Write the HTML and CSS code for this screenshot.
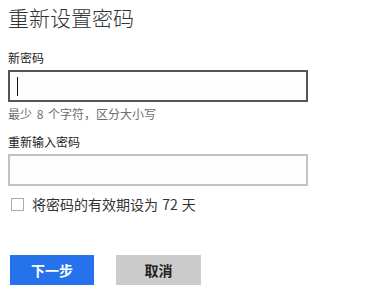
FILE: index.html
```html
<!DOCTYPE html>
<html lang="zh-CN">
<head>
<meta charset="utf-8">
<title>重新设置密码</title>
<link rel="stylesheet" href="styles.css">
</head>
<body>
<div class="page">
  <h1 class="title">重新设置密码</h1>
  <label class="label first">新密码</label>
  <div class="input active"><span class="caret"></span></div>
  <div class="hint">最少 8 个字符，区分大小写</div>
  <label class="label second">重新输入密码</label>
  <div class="input"></div>
  <div class="check-row">
    <span class="checkbox"></span>
    <span class="check-text">将密码的有效期设为 72 天</span>
  </div>
  <div class="buttons">
    <button class="btn primary">下一步</button>
    <button class="btn secondary">取消</button>
  </div>
</div>
</body>
</html>
```

FILE: styles.css
```css
* { box-sizing: border-box; }
html, body { margin: 0; padding: 0; background: #fff; }
body {
  font-family: "Noto Sans CJK SC", "Noto Sans", sans-serif;
  color: #222;
  width: 385px;
  height: 295px;
  overflow: hidden;
}
.page {
  padding: 4px 8px 0 8px;
  display: flex;
  flex-direction: column;
  align-items: flex-start;
}
.title {
  margin: 0;
  font-size: 21px;
  font-weight: 300;
  line-height: 26px;
  color: #333;
}
.label {
  display: block;
  font-size: 12px;
  line-height: 16px;
  color: #222;
}
.label.first { margin-top: 20px; }
.label.second { margin-top: 12px; }
.input {
  margin-top: 4px;
  width: 300px;
  height: 32px;
  border: 2px solid #c2c2c2;
  background: #fdfdfd;
  display: flex;
  align-items: center;
  padding-left: 7px;
}
.input.active { border-color: #555; }
.caret {
  width: 1px;
  height: 19px;
  background: #111;
}
.hint {
  margin-top: 4px;
  font-size: 12px;
  line-height: 16px;
  color: #6d6d6d;
  word-spacing: 2px;
}
.check-row {
  margin-top: 10px;
  display: flex;
  align-items: center;
  height: 16px;
  padding-left: 3px;
}
.checkbox {
  width: 13px;
  height: 13px;
  border: 1px solid #aaa;
  background: #fff;
}
.check-text {
  margin-left: 8px;
  font-size: 14px;
  line-height: 16px;
  color: #333;
  word-spacing: 1px;
}
.buttons {
  margin-top: 43px;
  display: flex;
  gap: 22px;
  padding-left: 2px;
}
.btn {
  height: 30px;
  border: none;
  font-family: "Noto Sans CJK SC", sans-serif;
  font-size: 14px;
  font-weight: bold;
  padding: 0;
  cursor: pointer;
}
.primary {
  width: 84px;
  background: #2672ec;
  color: #fff;
}
.secondary {
  width: 85px;
  background: #cccccc;
  color: #222;
}
```
